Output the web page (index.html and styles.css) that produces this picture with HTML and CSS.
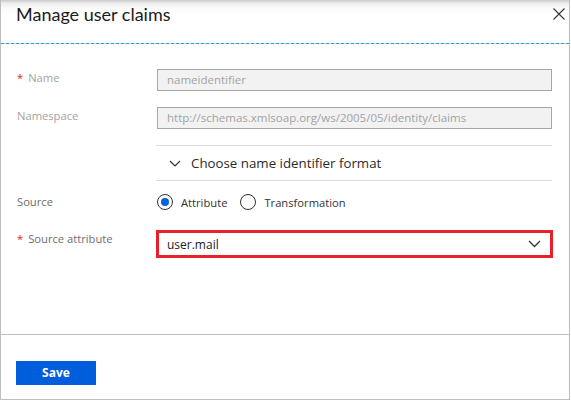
FILE: index.html
```html
<!DOCTYPE html>
<html>
<head>
<meta charset="utf-8">
<link rel="stylesheet" href="styles.css">
</head>
<body>
<div class="panel">
  <div class="header">
    <h1 class="title">Manage user claims</h1>
    <button class="close" aria-label="Close">
      <svg width="12" height="12" viewBox="0 0 12 12"><path d="M0.5 0.5 L11.5 11.5 M11.5 0.5 L0.5 11.5" stroke="#333" stroke-width="1.1" fill="none"/></svg>
    </button>
  </div>
  <div class="main">
    <div class="row row-name">
      <div class="label disabled"><span class="req">*</span>Name</div>
      <div class="field">nameidentifier</div>
    </div>
    <div class="row row-ns">
      <div class="label disabled">Namespace</div>
      <div class="field">http://schemas.xmlsoap.org/ws/2005/05/identity/claims</div>
    </div>
    <div class="row row-section">
      <div></div>
      <div class="section">
        <svg class="chev-small" width="12" height="7" viewBox="0 0 12 7"><path d="M1 1 L6 6 L11 1" stroke="#333" stroke-width="1.2" fill="none"/></svg>
        <span>Choose name identifier format</span>
      </div>
    </div>
    <div class="row row-source">
      <div class="label">Source</div>
      <div class="radios">
        <label class="radio"><span class="dot checked"></span>Attribute</label>
        <label class="radio"><span class="dot"></span>Transformation</label>
      </div>
    </div>
    <div class="row row-attr">
      <div class="label"><span class="req">*</span>Source attribute</div>
      <div class="select">
        <span>user.mail</span>
        <svg width="13" height="8" viewBox="0 0 13 8"><path d="M1 1 L6.5 6.5 L12 1" stroke="#333" stroke-width="1.3" fill="none"/></svg>
      </div>
    </div>
  </div>
  <div class="footer">
    <button class="save">Save</button>
  </div>
</div>
</body>
</html>
```
FILE: styles.css
```css
* { box-sizing: border-box; }
html, body { margin: 0; padding: 0; background: #fff; }
body {
  width: 571px;
  height: 400px;
  font-family: "Open Sans", "Noto Sans", sans-serif;
  color: #333;
}
.panel {
  width: 570px;
  height: 400px;
  border-left: 1px solid #bdbdbd;
  border-right: 1px solid #bdbdbd;
  border-bottom: 1px solid #bdbdbd;
  display: flex;
  flex-direction: column;
  background: #fff;
}
.header {
  height: 44px;
  border-bottom: 1px dashed #1aa3dd;
  display: flex;
  justify-content: space-between;
  align-items: flex-start;
  padding: 0 2px 0 15px;
  background: linear-gradient(to bottom, #c9c9c9 0px, #ececec 3px, #fafafa 8px, #fff 14px);
}
.title {
  margin: 0;
  font-family: Lato, "Open Sans", sans-serif;
  font-weight: 400;
  font-size: 18px;
  line-height: 29px;
  color: #1b1b1b;
}
.close {
  margin-top: 8px;
  width: 14px;
  height: 14px;
  padding: 0;
  border: 0;
  background: transparent;
  display: flex;
}
.main {
  flex: 1;
  padding: 25px 0 0 16px;
}
.row {
  display: grid;
  grid-template-columns: 140px 395px;
  align-items: start;
}
.label {
  font-size: 11.2px;
  line-height: 20px;
  color: #6e6e6e;
  margin-top: -1px;
}
.label.disabled { color: #a3a3a3; }
.req {
  color: #e3242b;
  margin-right: 5px;
}
.field {
  height: 22px;
  border: 1px solid #a6a6a6;
  background: #f2f2f2;
  color: #a3a3a3;
  font-size: 11.5px;
  line-height: 20px;
  padding-left: 9px;
  white-space: nowrap;
  overflow: hidden;
}
.row-name { margin-bottom: 16px; }
.row-ns { margin-bottom: 16px; }
.section {
  height: 36px;
  border-top: 1px solid #dcdcdc;
  border-bottom: 1px solid #dcdcdc;
  display: flex;
  align-items: center;
  font-size: 13.3px;
  color: #2b2b2b;
  margin-left: -1px;
}
.chev-small { margin: 1px 0 0 13px; }
.section span { margin-left: 10px; }
.row-source { margin-top: 10px; align-items: center; height: 22px; }
.row-source .label { margin-top: 0; }
.radios {
  display: flex;
  align-items: center;
  font-size: 11.2px;
  color: #333;
}
.radio {
  display: flex;
  align-items: center;
  margin-right: 13px;
}
.dot {
  width: 16px;
  height: 16px;
  border: 1px solid #333;
  border-radius: 50%;
  margin-right: 8px;
  position: relative;
}
.dot.checked::after {
  content: "";
  position: absolute;
  left: 3px;
  top: 3px;
  width: 8px;
  height: 8px;
  border-radius: 50%;
  background: #0063db;
}
.row-attr { margin-top: 17px; }
.select {
  margin-left: -1px;
  width: 397px;
  height: 28px;
  border: 3px solid #e8202a;
  display: flex;
  align-items: center;
  justify-content: space-between;
  padding: 0 9px 0 8px;
  font-size: 12px;
  color: #1b1b1b;
}
.footer {
  height: 65px;
  border-top: 1px solid #bdbdbd;
  padding: 25px 0 0 15px;
}
.save {
  width: 80px;
  height: 24px;
  border: 0;
  background: #005ddc;
  color: #fff;
  font-family: "Open Sans", "Noto Sans", sans-serif;
  font-weight: 700;
  font-size: 12px;
  padding: 0;
}
```
